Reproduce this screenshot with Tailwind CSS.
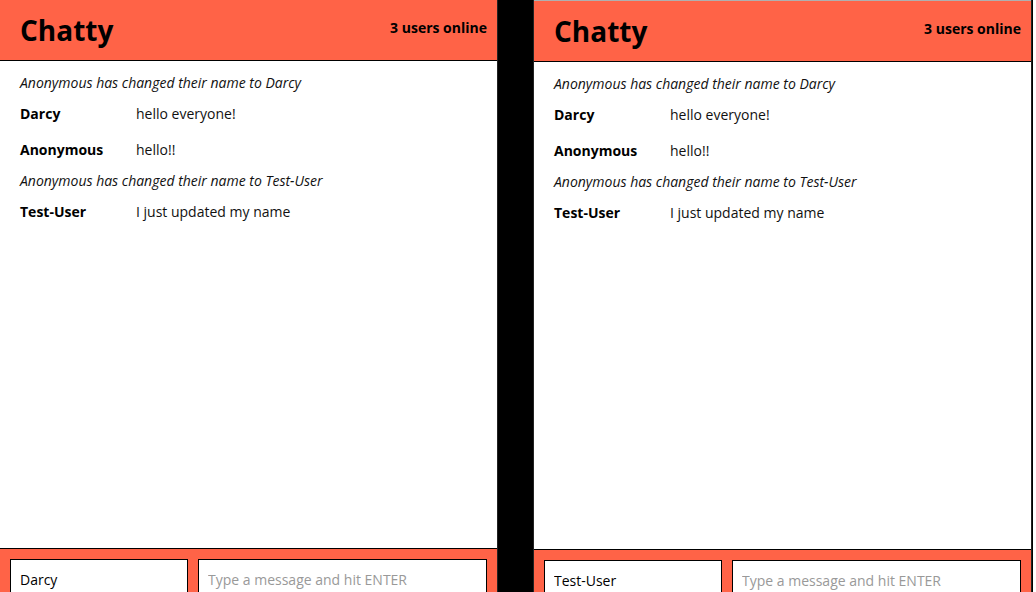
<!DOCTYPE html>
<html lang="en" class="bg-white">
<head>
<meta charset="utf-8">
<title>Chatty</title>
<script src="https://cdn.jsdelivr.net/npm/@tailwindcss/browser@4"></script>
</head>
<body class="mr-[3px] flex h-screen gap-[35px] overflow-hidden bg-black pr-px font-['Open_Sans',sans-serif] text-sm text-black">
  <section class="flex min-w-0 flex-1 flex-col border-r border-[#222] bg-white">
    <header class="flex h-[61px] shrink-0 justify-between border-b border-black bg-[#ff6347] pl-5 pr-2.5 font-bold">
      <h1 class="pt-2.5 text-[28px] leading-10">Chatty</h1>
      <p class="pt-[18px] leading-5">3 users online</p>
    </header>
    <main class="flex-1 px-5 pt-[9px]">
      <p class="leading-[26px] italic text-[#111]">Anonymous has changed their name to Darcy</p>
      <div class="flex py-2"><span class="w-[116px] font-bold">Darcy</span><span class="text-[#111]">hello everyone!</span></div>
      <div class="flex py-2"><span class="w-[116px] font-bold">Anonymous</span><span class="text-[#111]">hello!!</span></div>
      <p class="leading-[26px] italic text-[#111]">Anonymous has changed their name to Test-User</p>
      <div class="flex py-2"><span class="w-[116px] font-bold">Test-User</span><span class="text-[#111]">I just updated my name</span></div>
    </main>
    <footer class="flex h-11 shrink-0 gap-2.5 border-t border-black bg-[#ff6347] px-2.5 pt-2.5">
      <input aria-label="Your name" value="Darcy" class="h-10 w-[178px] border border-black bg-white px-[9px]">
      <input aria-label="Message" placeholder="Type a message and hit ENTER" class="h-10 min-w-0 flex-1 border border-black bg-white px-[9px] placeholder:text-[#999]">
    </footer>
  </section>
  <section class="flex min-w-0 flex-1 flex-col border-x border-[#222] bg-white">
    <div class="h-px shrink-0 bg-[#b0b0b0]"></div>
    <header class="flex h-[61px] shrink-0 justify-between border-b border-black bg-[#ff6347] pl-5 pr-2.5 font-bold">
      <h1 class="pt-2.5 text-[28px] leading-10">Chatty</h1>
      <p class="pt-[18px] leading-5">3 users online</p>
    </header>
    <main class="flex-1 px-5 pt-[9px]">
      <p class="leading-[26px] italic text-[#111]">Anonymous has changed their name to Darcy</p>
      <div class="flex py-2"><span class="w-[116px] font-bold">Darcy</span><span class="text-[#111]">hello everyone!</span></div>
      <div class="flex py-2"><span class="w-[116px] font-bold">Anonymous</span><span class="text-[#111]">hello!!</span></div>
      <p class="leading-[26px] italic text-[#111]">Anonymous has changed their name to Test-User</p>
      <div class="flex py-2"><span class="w-[116px] font-bold">Test-User</span><span class="text-[#111]">I just updated my name</span></div>
    </main>
    <footer class="flex h-[43px] shrink-0 gap-2.5 border-t border-black bg-[#ff6347] px-2.5 pt-2.5">
      <input aria-label="Your name" value="Test-User" class="h-10 w-[178px] border border-black bg-white px-[9px]">
      <input aria-label="Message" placeholder="Type a message and hit ENTER" class="h-10 min-w-0 flex-1 border border-black bg-white px-[9px] placeholder:text-[#999]">
    </footer>
  </section>
</body>
</html>
